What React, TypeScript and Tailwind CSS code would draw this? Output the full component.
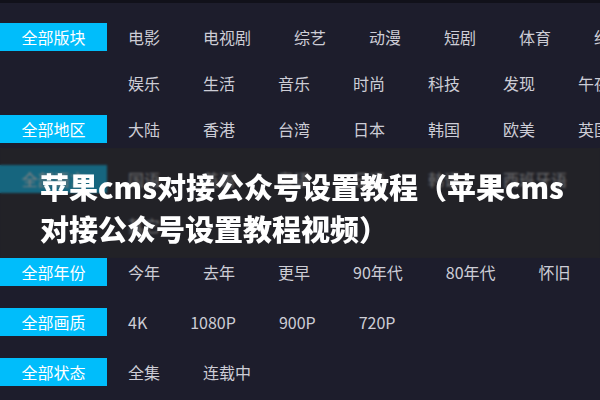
import React from "react";

type Row = { label?: string; items: string[]; cls?: string };

const rows: Row[] = [
  { label: "全部版块", items: ["电影", "电视剧", "综艺", "动漫", "短剧", "体育", "纪录片"] },
  { items: ["娱乐", "生活", "音乐", "时尚", "科技", "发现", "午夜"] },
  { label: "全部地区", items: ["大陆", "香港", "台湾", "日本", "韩国", "欧美", "英国"] },
  { label: "全部语言", items: ["国语", "英语", "粤语", "日语", "韩语", "西班牙语"], cls: "mt-[4px]" },
  { items: ["其它"] },
  { label: "全部年份", items: ["今年", "去年", "更早", "90年代", "80年代", "怀旧"], cls: "mt-[1px]" },
  { label: "全部画质", items: ["4K", "1080P", "900P", "720P"], cls: "mt-[4px]" },
  { label: "全部状态", items: ["全集", "连载中"], cls: "mt-[4px]" },
];

function Line({ row }: { row: Row }) {
  return (
    <div className={`flex h-[46px] items-center whitespace-nowrap ${row.cls ?? ""}`}>
      {row.label ? (
        <div className="flex h-[28px] w-[107px] shrink-0 items-center justify-center bg-[#00bdfb] text-[16px] text-white">
          {row.label}
        </div>
      ) : (
        <div className="w-[107px] shrink-0" />
      )}
      <div className="flex gap-[43px] pl-[21px] text-[16px] text-[#cdcdd6]">
        {row.items.map((t) => (
          <span key={t}>{t}</span>
        ))}
      </div>
    </div>
  );
}

export default function App() {
  return (
    <div
      className="relative h-[400px] w-[600px] overflow-hidden bg-[#1d1d2c]"
      style={{ fontFamily: '"Noto Sans CJK SC", "Noto Sans", sans-serif' }}
    >
      <div className="h-[3px] bg-[#11111a]" />
      <div className="pt-[11px]">
        {rows.map((r, i) => (
          <Line key={i} row={r} />
        ))}
      </div>
      <div className="absolute left-0 top-[148px] h-[110px] w-full bg-[#26262594] backdrop-blur-[1px]">
        <div className="pl-[40px] pt-[17px] text-[29px] font-black leading-[42px] text-white whitespace-nowrap">
          <div>苹果cms对接公众号设置教程（苹果cms</div>
          <div>对接公众号设置教程视频）</div>
        </div>
      </div>
    </div>
  );
}
